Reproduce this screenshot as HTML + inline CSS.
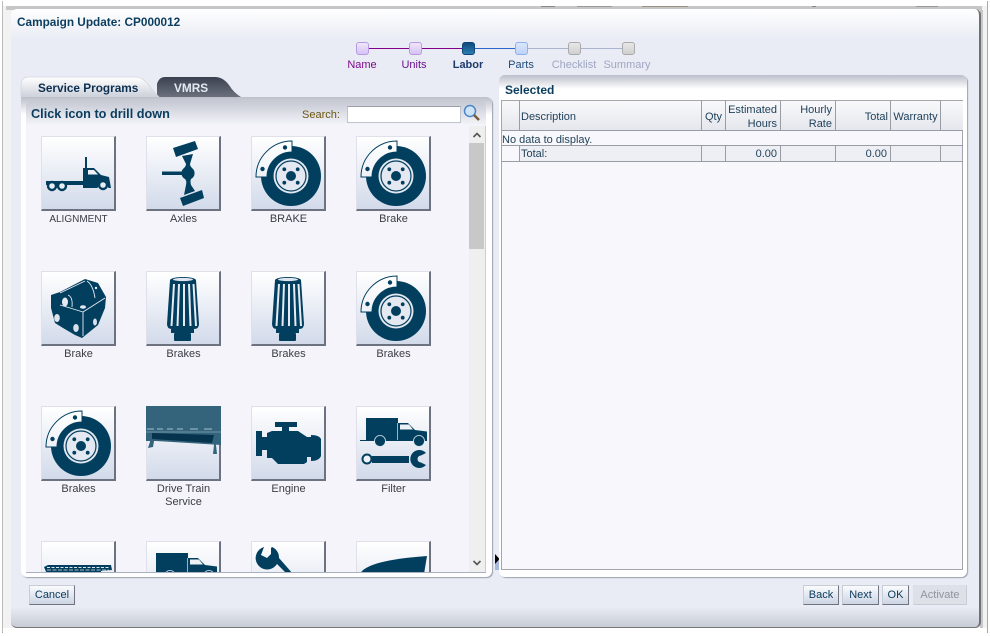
<!DOCTYPE html>
<html><head><meta charset="utf-8"><style>
html,body{margin:0;padding:0;background:#fff}
#p{position:relative;width:990px;height:636px;overflow:hidden;background:#fff;font:11px/14px "Liberation Sans",sans-serif;color:#333}
#p div,#p span.t{position:absolute;box-sizing:border-box}
.t{white-space:nowrap}
.c{text-align:center}
.tile{width:75px;height:75px;background:linear-gradient(#fff,#d2daea);border-style:solid;border-width:1px 2px 2px 1px;border-color:#e0e0ea #6c7280 #6c7280 #e0e0ea}
.tile svg{position:absolute;left:-1px;top:-1px;width:75px;height:75px;fill:#023f5f}
.lab{width:105px;text-align:center;line-height:13px;color:#3c3c46}
.btn{height:20px;top:585px;background:linear-gradient(#fafbfd,#ccd5e4);border:1px solid;border-color:#c8ccd4 #6f7480 #6f7480 #c8ccd4;color:#0a3a5c;text-align:center;line-height:18px}
.th{top:101px;height:30px;background:linear-gradient(#f9f9fb,#e4e6ec);border-right:1px solid #9a9ca5;color:#1d3f58;line-height:13px}
.ft{top:146px;height:15px;background:#eeeff4;border-right:1px solid #9a9ca5;color:#1d3f58;line-height:17px;text-align:right;padding-right:3px}
.dot{width:13px;height:13px;border-radius:3px;top:42px}
.st{top:58px;width:80px;text-align:center}
</style></head><body><div id="p">
<svg width="0" height="0" style="position:absolute"><defs>
<linearGradient id="cg" x1="0" y1="0" x2="0" y2="1"><stop offset="0" stop-color="#fff"/><stop offset="1" stop-color="#eef1f7"/></linearGradient>
<symbol id="disc" viewBox="0 0 75 75">
<circle cx="40" cy="40" r="30"/><circle cx="40" cy="40" r="17.5" fill="#e4e9f1"/><circle cx="40" cy="40" r="15" fill="none" stroke="#023f5f" stroke-width="1.2"/><circle cx="40" cy="40" r="5"/><circle cx="33.3" cy="33.3" r="1.9"/><circle cx="46.7" cy="33.3" r="1.9"/><circle cx="33.3" cy="46.7" r="1.9"/><circle cx="46.7" cy="46.7" r="1.9"/>
<path d="M5 41A36 36 0 0 1 41 5V16A25 25 0 0 0 16 41Z" fill="url(#cg)" stroke="#023f5f" stroke-width="1"/>
<circle cx="11.5" cy="33" r="2.2"/><circle cx="34" cy="11.5" r="2.2"/>
</symbol>
<symbol id="flt" viewBox="0 0 75 75">
<path d="M24 9C26 5 48 5 50 9L53 53Q53 58 48 58H26Q21 58 21 53Z"/><rect x="28" y="62" width="17" height="8" rx="1"/><rect x="25" y="58" width="23" height="4"/>
<ellipse cx="37" cy="8.500" rx="10" ry="1.600" fill="#dfe6ef"/>
<path d="M28 13L25.500 55M33 13L31.500 55M38 13L38 55M43 13L44.500 55M47.500 13L50 55" stroke="#e6ebf3" stroke-width="2" fill="none"/>
</symbol>
<symbol id="trk" viewBox="0 0 75 75">
<path d="M10 12H42V17H52L59 24L71 25.500V35H4V34H10Z"/><path d="M44 18.500H53L57 23.500H44Z" fill="#eef2f7"/><path d="M41.500 17V34" stroke="#dfe6ef" stroke-width=".7"/>
<circle cx="24" cy="35" r="5.500" stroke="#dfe6ef" stroke-width=".8"/><circle cx="63" cy="35" r="5.500" stroke="#dfe6ef" stroke-width=".8"/>
</symbol>
</defs></svg>

<!-- backdrop -->
<div style="left:2px;top:1px;width:986px;height:632px;border-left:1px solid #bbb;border-right:1px solid #aaa;border-bottom:1px solid #999;background:#fff"></div>
<div style="left:3px;top:6px;width:984px;height:622px;background:#f2f2f2"></div>
<div style="left:6px;top:6px;width:976px;height:4px;background:#c6c6c6"></div>
<div style="left:541px;top:6px;width:14px;height:1px;background:#888"></div>
<div style="left:577px;top:6px;width:35px;height:1px;background:#999"></div>
<div style="left:642px;top:6px;width:46px;height:1px;background:#998f7e"></div>
<div style="left:812px;top:6px;width:4px;height:1px;background:#888"></div>
<div style="left:916px;top:6px;width:22px;height:1px;background:#999"></div>
<div style="left:980px;top:10px;width:3px;height:618px;background:#c8c8c8"></div>
<div style="left:3px;top:628px;width:984px;height:5px;background:#fff"></div>

<!-- dialog -->
<div style="left:11px;top:9px;width:970px;height:619px;border-radius:6px;background:linear-gradient(#fff 0,#e9ecf4 30px,#e9ecf4 598px,#c8ccd6 100%);border-right:2px solid #6e7074;border-bottom:1px solid #777"></div>
<span class="t" style="left:17px;top:15px;font-size:11.800px;font-weight:bold;color:#0a3d5e">Campaign Update: CP000012</span>

<!-- train -->
<div style="left:369px;top:48px;width:106px;height:1px;background:#800088"></div>
<div style="left:475px;top:48px;width:46px;height:1px;background:#2a66cc"></div>
<div style="left:528px;top:48px;width:100px;height:1px;background:#aab4cf"></div>
<div class="dot" style="left:356px;background:linear-gradient(#efe6fb,#d6c2f4);border:1px solid #b89ae4"></div>
<div class="dot" style="left:409px;background:linear-gradient(#efe6fb,#d6c2f4);border:1px solid #b89ae4"></div>
<div class="dot" style="left:462px;background:linear-gradient(#0d4a80,#2f7cae);border:1px solid #0c4478"></div>
<div class="dot" style="left:515px;background:linear-gradient(#dbe8fd,#bed2f8);border:1px solid #8db0ee"></div>
<div class="dot" style="left:568px;background:linear-gradient(#e8e8e8,#cfcfcf);border:1px solid #aaa"></div>
<div class="dot" style="left:622px;background:linear-gradient(#e8e8e8,#cfcfcf);border:1px solid #aaa"></div>
<span class="t st" style="left:322px;color:#7d0a8c">Name</span>
<span class="t st" style="left:374px;color:#6a1090">Units</span>
<span class="t st" style="left:428px;color:#1c3a6e;font-weight:bold">Labor</span>
<span class="t st" style="left:481px;color:#1d4a7c">Parts</span>
<span class="t st" style="left:534px;color:#a0a6c2">Checklist</span>
<span class="t st" style="left:587px;color:#a0a6c2">Summary</span>

<!-- tabs -->
<svg style="position:absolute;left:20px;top:76px" width="225" height="24">
<defs><linearGradient id="ta" x1="0" y1="0" x2="0" y2="1"><stop offset="0" stop-color="#fff"/><stop offset="1" stop-color="#ccd0d9"/></linearGradient>
<linearGradient id="tb" x1="0" y1="0" x2="0" y2="1"><stop offset="0" stop-color="#3a4150"/><stop offset="1" stop-color="#6c707c"/></linearGradient></defs>
<path d="M137 21V8Q139 1 145 1H195Q203 1 209 9Q214 17 221 21Z" fill="url(#tb)"/>
<path d="M1 21V9Q1 1 9 1H116Q122 1 128 8Q134 16 139 21Z" fill="url(#ta)" stroke="#d4d6de" stroke-width=".7"/>
</svg>
<span class="t" style="left:38px;top:81px;font-size:11.800px;font-weight:bold;color:#0c2f50">Service Programs</span>
<span class="t" style="left:174px;top:81px;font-size:11.800px;font-weight:bold;color:#e4eaf4">VMRS</span>

<!-- left panel -->
<div style="left:21px;top:97px;width:471px;height:480px;background:linear-gradient(#bcbfca,#fff 18px);border-radius:0 6px 6px 6px;box-shadow:1px 1px 1px #9aa0ac;background-color:#fff"></div>
<div style="left:26px;top:101px;width:460px;height:472px;border-radius:5px 5px 0 0;background:linear-gradient(#c6c9d3,#f4f4fa 24px);border-bottom:1px solid #a8b0c0"></div>
<span class="t" style="left:31px;top:107px;font-size:12.700px;font-weight:bold;color:#0a3d5e">Click icon to drill down</span>
<span class="t" style="left:302px;top:108px;color:#6b5610">Search:</span>
<div style="left:347px;top:106px;width:114px;height:17px;background:#fff;border:1px solid #c0c4cc;border-top-color:#9a9ea8"></div>
<svg style="position:absolute;left:463px;top:104px" width="18" height="18"><circle cx="7" cy="7" r="5.500" fill="#cfe3f8" stroke="#4a86c8" stroke-width="1.500"/><path d="M11 11L16 16" stroke="#7a5a3a" stroke-width="2.500"/></svg>

<!-- scrollbar -->
<div style="left:469px;top:126px;width:17px;height:446px;background:#efefef;border-right:1px solid #c9cdd6"></div>
<div style="left:469px;top:143px;width:15px;height:106px;background:#c8c8c8"></div>
<svg style="position:absolute;left:472px;top:131px" width="10" height="8"><path d="M1.500 6L5 2.500L8.500 6" fill="none" stroke="#555" stroke-width="1.600"/></svg>
<svg style="position:absolute;left:472px;top:559px" width="10" height="8"><path d="M1.500 2L5 5.500L8.500 2" fill="none" stroke="#555" stroke-width="1.600"/></svg>

<!-- tile grid -->
<div style="left:26px;top:126px;width:443px;height:446px;overflow:hidden">
<div class="tile" style="left:15px;top:10px"><svg viewBox="0 0 75 75"><path d="M44 21H46V32H53L60 39L68 41L70 52H67.500A5.800 5.800 0 0 0 56.500 52H42V49H5V45H42V32H44Z"/><path d="M47 34H53L57 38.500H47Z" fill="#eef2f7"/><circle cx="11" cy="50" r="4" fill="#e8edf4" stroke="#023f5f" stroke-width="2.400"/><circle cx="21" cy="50" r="4" fill="#e8edf4" stroke="#023f5f" stroke-width="2.400"/><circle cx="62" cy="49" r="4" fill="#e8edf4" stroke="#023f5f" stroke-width="2.400"/></svg></div>
<div class="tile" style="left:120px;top:10px"><svg viewBox="0 0 75 75"><path d="M27 12L49 5L52 13L30 21Z"/><path d="M34 62L56 54L58 62L37 70Z"/><path d="M36 20L47 18L44 28Q44 30 46 32A6.500 6.500 0 0 1 45 43Q44 45 45 49L49 55L38 59L40 49Q41 45 39 43A6.500 6.500 0 0 1 38 32Q40 30 40 28Z"/><rect x="16" y="35.500" width="23" height="3.500"/></svg></div>
<div class="tile" style="left:225px;top:10px"><svg viewBox="0 0 75 75"><use href="#disc" width="75" height="75"/></svg></div>
<div class="tile" style="left:330px;top:10px"><svg viewBox="0 0 75 75"><use href="#disc" width="75" height="75"/></svg></div>

<div class="tile" style="left:15px;top:145px"><svg viewBox="0 0 75 75"><path d="M10 24L19 21L44 8L57 12L65 26L64 37L57 54L41 67L34 64L22 57L14 52L10 37Z"/><path d="M42 41V65M42 41L64 27M19 22L44 10M19 34L29 37L42 41M27 24Q32 26 31 36M46 10Q52 14 54 27" stroke="#e6ebf3" stroke-width=".900" fill="none"/><ellipse cx="24" cy="31" rx="3" ry="4.500" fill="#e6ebf3"/><ellipse cx="16" cy="47" rx="2.800" ry="4" fill="#dde4ee"/><ellipse cx="35" cy="57" rx="2.800" ry="4" fill="#d8e0eb"/><ellipse cx="54" cy="51" rx="2" ry="3.500" fill="#d8e0eb"/><ellipse cx="42" cy="36" rx="3" ry="1.800" fill="#e6ebf3"/><circle cx="55" cy="17" r="1.200" fill="#e6ebf3"/></svg></div>
<div class="tile" style="left:120px;top:145px"><svg viewBox="0 0 75 75"><use href="#flt" width="75" height="75"/></svg></div>
<div class="tile" style="left:225px;top:145px"><svg viewBox="0 0 75 75"><use href="#flt" width="75" height="75"/></svg></div>
<div class="tile" style="left:330px;top:145px"><svg viewBox="0 0 75 75"><use href="#disc" width="75" height="75"/></svg></div>

<div class="tile" style="left:15px;top:280px"><svg viewBox="0 0 75 75"><use href="#disc" width="75" height="75"/></svg></div>
<div class="tile" style="left:120px;top:280px"><svg viewBox="0 0 75 75"><path d="M0 0H75V39L10 35H0Z" fill="#33647c"/><path d="M6 27L68 29L66 37L6 33Z" fill="#06344f"/><path d="M1 23H8M11 23H17M21 23H27M31 23H37M44 23H52M58 23H66" stroke="#a9c0cc" stroke-width="1" fill="none"/><path d="M0 26H75" stroke="#8aa6b5" stroke-width=".8"/><path d="M3 28L8 35L7 41L2 42L4 36Z" fill="#33647c"/><path d="M69 30L71 48H67Z" fill="#33647c"/></svg></div>
<div class="tile" style="left:225px;top:280px"><svg viewBox="0 0 75 75"><rect x="24" y="16" width="22" height="5"/><rect x="31" y="21" width="7" height="4"/><path d="M5 25H11V31H16V27L21 25H47L56 31H60V29Q68 29 70 33V50Q68 55 60 55V51H56V56L53 58H27L21 52H16V44H11V50H5Z"/></svg></div>
<div class="tile" style="left:330px;top:280px"><svg viewBox="0 0 75 75"><use href="#trk" width="75" height="75"/><circle cx="11" cy="53" r="4.500" fill="#eef1f7" stroke="#023f5f" stroke-width="2"/><rect x="16" y="50" width="37" height="7"/><path d="M70 47A9 9 0 1 0 70 59L65 56.500A3.500 3.500 0 1 1 65 49.500Z"/></svg></div>

<div class="tile" style="left:15px;top:415px"><svg viewBox="0 0 75 75"><path d="M3 26L7 24H70L71 29L60 30V34H40V31H16L14 33H6Z"/><path d="M6 26.500H68" stroke="#dfe6ef" stroke-width="1" stroke-dasharray="3 1.500"/><path d="M6 29H68" stroke="#dfe6ef" stroke-width=".8" stroke-dasharray="4 1.500"/></svg></div>
<div class="tile" style="left:120px;top:415px"><svg viewBox="0 0 75 75"><use href="#trk" width="75" height="75"/></svg></div>
<div class="tile" style="left:225px;top:415px"><svg viewBox="0 0 75 75"><path d="M13 6A11.500 11.500 0 1 0 26 23L36 33L42 33L28 17A11.500 11.500 0 0 0 21 6L20 7V13L16 17L10 14Z"/></svg></div>
<div class="tile" style="left:330px;top:415px"><svg viewBox="0 0 75 75"><path d="M4 33C8 24 30 18 71 15L68 33Z"/></svg></div>

<span class="t lab" style="left:0;top:87px;font-size:10px">ALIGNMENT</span>
<span class="t lab" style="left:105px;top:87px">Axles</span>
<span class="t lab" style="left:210px;top:87px">BRAKE</span>
<span class="t lab" style="left:315px;top:87px">Brake</span>
<span class="t lab" style="left:0;top:222px">Brake</span>
<span class="t lab" style="left:105px;top:222px">Brakes</span>
<span class="t lab" style="left:210px;top:222px">Brakes</span>
<span class="t lab" style="left:315px;top:222px">Brakes</span>
<span class="t lab" style="left:0;top:357px">Brakes</span>
<span class="t lab" style="left:105px;top:357px">Drive Train<br>Service</span>
<span class="t lab" style="left:210px;top:357px">Engine</span>
<span class="t lab" style="left:315px;top:357px">Filter</span>
</div>

<!-- splitter marker -->
<div style="left:495px;top:560px;width:4px;height:10px;background:#a8b8dc"></div>
<svg style="position:absolute;left:494px;top:553px" width="7" height="12"><path d="M1 1L5.500 6L1 11Z" fill="#000"/></svg>

<!-- right panel -->
<div style="left:499px;top:75px;width:468px;height:502px;border-radius:6px;background:linear-gradient(#bcbfca,#fff 14px);box-shadow:1px 1px 1px #9aa0ac"></div>
<span class="t" style="left:505px;top:83px;font-size:12px;font-weight:bold;color:#0a3d5e">Selected</span>
<div style="left:501px;top:100px;width:462px;height:470px;background:#f8f8fc;border:1px solid #a4a6ae"></div>

<div class="th" style="left:502px;width:18px"></div>
<div class="th" style="left:520px;width:182px;line-height:33px;padding-left:1px">Description</div>
<div class="th" style="left:702px;width:24px;line-height:33px;text-align:center">Qty</div>
<div class="th" style="left:726px;width:55px;text-align:right;padding:3px 3px 0 0;line-height:13.500px">Estimated<br>Hours</div>
<div class="th" style="left:781px;width:55px;text-align:right;padding:3px 3px 0 0;line-height:13.500px">Hourly<br>Rate</div>
<div class="th" style="left:836px;width:55px;text-align:right;padding-right:2px;line-height:33px">Total</div>
<div class="th" style="left:891px;width:50px;text-align:center;line-height:33px">Warranty</div>
<div class="th" style="left:941px;width:22px;border-right:0"></div>
<div style="left:502px;top:130px;width:461px;height:1px;background:#9a9ca5"></div>

<span class="t" style="left:502px;top:133px;color:#1d3f58">No data to display.</span>

<div style="left:502px;top:145px;width:461px;height:17px;border-top:1px solid #9a9ca5;border-bottom:1px solid #9a9ca5"></div>
<div class="ft" style="left:502px;width:18px;background:#f8f8fc"></div>
<div class="ft" style="left:520px;width:182px;text-align:left;padding-left:1px">Total:</div>
<div class="ft" style="left:702px;width:24px"></div>
<div class="ft" style="left:726px;width:55px">0.00</div>
<div class="ft" style="left:781px;width:55px"></div>
<div class="ft" style="left:836px;width:55px">0.00</div>
<div class="ft" style="left:891px;width:50px"></div>
<div class="ft" style="left:941px;width:21px;border-right:0"></div>

<!-- buttons -->
<div class="btn" style="left:29px;width:46px">Cancel</div>
<div class="btn" style="left:803px;width:36px">Back</div>
<div class="btn" style="left:842px;width:37px">Next</div>
<div class="btn" style="left:882px;width:27px">OK</div>
<div class="btn" style="left:913px;width:54px;background:#dde0e7;border-color:#dcdfe5 #c8ccd4 #c8ccd4 #dcdfe5;color:#8f939c">Activate</div>
</div></body></html>
